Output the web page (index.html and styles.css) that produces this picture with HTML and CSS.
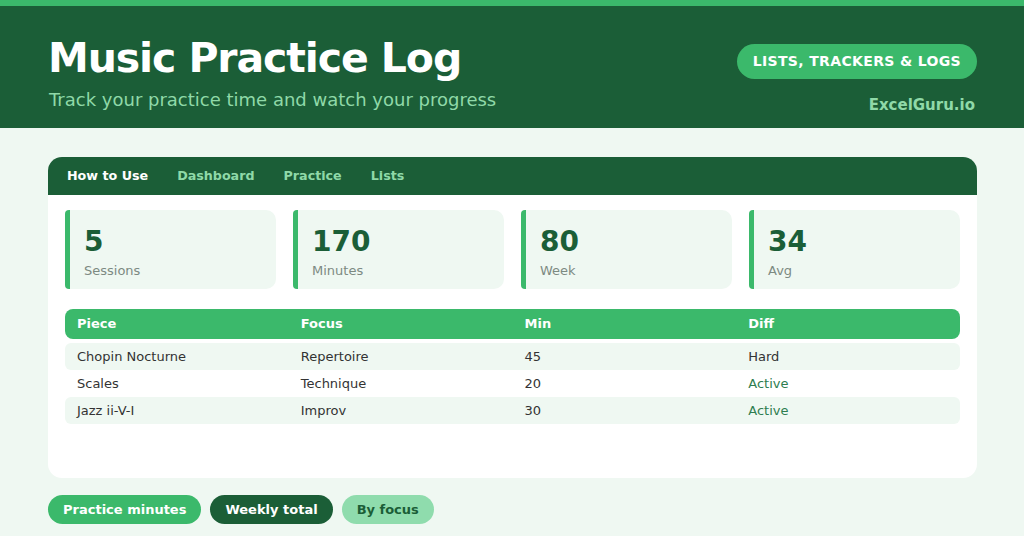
FILE: index.html
```html
<!DOCTYPE html>
<html lang="en">
<head>
    <meta charset="UTF-8">
    <meta name="viewport" content="width=device-width, initial-scale=1.0">
    <title>Music Practice Log</title>
    <link rel="stylesheet" href="styles.css">
</head>
<body>

    <header class="top">
        <div class="brand">
            <h1>Music Practice Log</h1>
            <p class="tagline">Track your practice time and watch your progress</p>
        </div>
        <div class="side">
            <span class="badge">LISTS, TRACKERS &amp; LOGS</span>
            <span class="site">ExcelGuru.io</span>
        </div>
    </header>

    <div class="content">
        <div class="sheet">
            <!-- Tabs -->
            <nav class="tabs">
                <a class="tab active">How to Use</a>
                <a class="tab">Dashboard</a>
                <a class="tab">Practice</a>
                <a class="tab">Lists</a>
            </nav>

            <div class="sheet-body">
                <!-- Stats -->
                <div class="stats">
                    <div class="stat"><div class="num">5</div><div class="label">Sessions</div></div>
                    <div class="stat"><div class="num">170</div><div class="label">Minutes</div></div>
                    <div class="stat"><div class="num">80</div><div class="label">Week</div></div>
                    <div class="stat"><div class="num">34</div><div class="label">Avg</div></div>
                </div>

                <!-- Practice table -->
                <div class="log">
                    <div class="row head">
                        <span>Piece</span><span>Focus</span><span>Min</span><span>Diff</span>
                    </div>
                    <div class="row alt">
                        <span>Chopin Nocturne</span><span>Repertoire</span><span>45</span><span>Hard</span>
                    </div>
                    <div class="row">
                        <span>Scales</span><span>Technique</span><span>20</span><span class="active-state">Active</span>
                    </div>
                    <div class="row alt">
                        <span>Jazz ii-V-I</span><span>Improv</span><span>30</span><span class="active-state">Active</span>
                    </div>
                </div>
            </div>
        </div>

        <div class="chips">
            <span class="chip chip-green">Practice minutes</span>
            <span class="chip chip-dark">Weekly total</span>
            <span class="chip chip-light">By focus</span>
        </div>
    </div>

</body>
</html>
```

FILE: styles.css
```css
/* Basic Styles */
body {
    font-family: 'DejaVu Sans', 'Liberation Sans', sans-serif;
    background-color: #eff8f2;
    margin: 0;
    padding: 0;
    color: #333;
}
.top {
    background-color: #1b5e37;
    border-top: 6px solid #3bb96b;
    padding: 0 47px 0 48px;
    display: flex;
    justify-content: space-between;
    box-sizing: border-box;
    height: 128px;
}
.top h1 {
    margin: 27px 0 0;
    font-size: 41px;
    letter-spacing: -1.1px;
    line-height: 50px;
    color: #fff;
    font-weight: bold;
}
.tagline {
    margin: 6px 0 0 1px;
    font-size: 18px;
    color: #8fd9a8;
}
.side {
    display: flex;
    flex-direction: column;
    align-items: flex-end;
    padding-top: 38px;
}
.badge {
    background-color: #3bb96b;
    color: #fff;
    font-weight: bold;
    font-size: 14px;
    letter-spacing: 0.35px;
    padding: 0 16px;
    height: 35px;
    line-height: 35px;
    border-radius: 18px;
}
.site {
    margin-top: 17px;
    margin-right: 2px;
    font-weight: bold;
    font-size: 15px;
    color: #8fd9a8;
}
.content {
    padding: 29px 47px 0 48px;
}
.sheet {
    background-color: #fff;
    border-radius: 14px;
    overflow: hidden;
    height: 321px;
}
.tabs {
    background-color: #1b5e37;
    height: 38px;
    box-sizing: border-box;
    padding: 0 0 2px 19px;
    display: flex;
    align-items: center;
    gap: 29px;
}
.tab {
    font-size: 12.7px;
    font-weight: bold;
    color: #8fd9a8;
}
.tab.active {
    color: #fff;
}
.sheet-body {
    padding: 15px 17px;
}
.stats {
    display: grid;
    grid-template-columns: repeat(4, 1fr);
    gap: 17px;
}
.stat {
    background-color: #eff8f2;
    border-left: 5px solid #3bb96b;
    border-radius: 4px 10px 10px 4px;
    height: 79px;
    padding: 15px 0 0 14px;
    box-sizing: border-box;
}
.num {
    font-size: 28px;
    font-weight: bold;
    color: #1b5e37;
    line-height: 34px;
}
.label {
    font-size: 13px;
    color: #7d8a82;
    margin-top: 4px;
}
.log {
    margin-top: 20px;
}
.row {
    display: grid;
    grid-template-columns: repeat(4, 1fr);
    height: 27px;
    padding-bottom: 1px;
    box-sizing: border-box;
    align-items: center;
    font-size: 13px;
    border-radius: 6px;
}
.row span {
    padding: 0 12px;
}
.row.head {
    background-color: #3bb96b;
    color: #fff;
    font-weight: bold;
    height: 30px;
    border-radius: 8px;
    margin-bottom: 4px;
}
.row.alt {
    background-color: #eff8f2;
}
.active-state {
    color: #2e7d50;
}
.chips {
    display: flex;
    gap: 9px;
    margin-top: 17px;
}
.chip {
    font-size: 13px;
    font-weight: bold;
    height: 29px;
    line-height: 29px;
    padding: 0 15px;
    border-radius: 15px;
}
.chip-green {
    background-color: #3bb96b;
    color: #fff;
}
.chip-dark {
    background-color: #1b5e37;
    color: #fff;
}
.chip-light {
    background-color: #8fdcad;
    color: #1b5e37;
}
```
